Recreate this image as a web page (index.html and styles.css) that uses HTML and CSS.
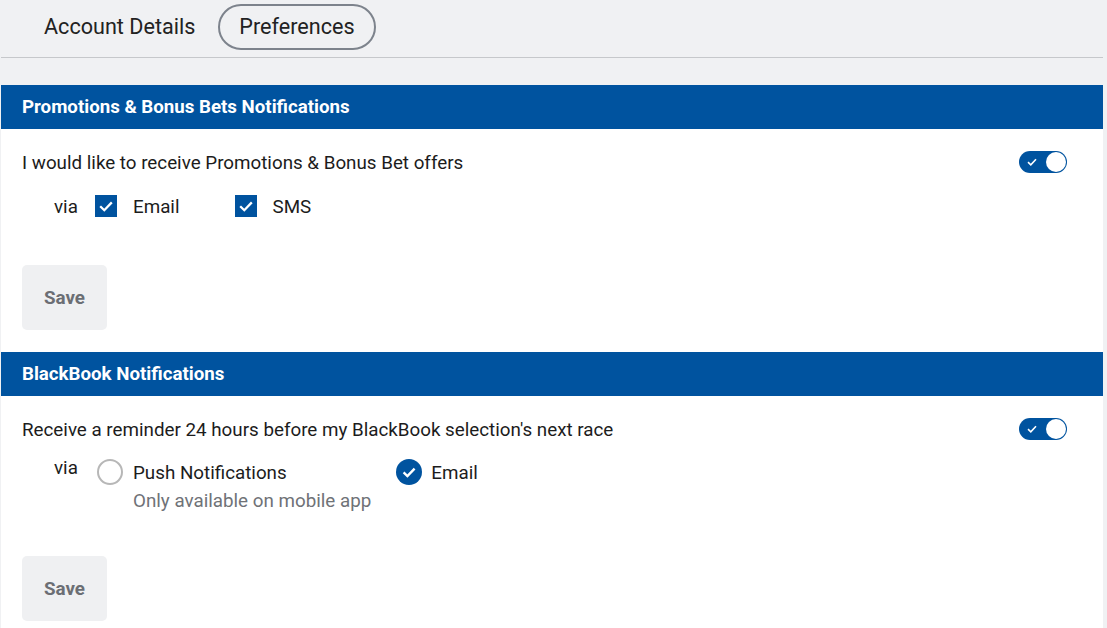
FILE: index.html
```html
<!DOCTYPE html>
<html>
<head>
<meta charset="utf-8">
<link rel="stylesheet" href="styles.css">
</head>
<body>
<div class="page">
  <nav class="tabs">
    <span class="tab">Account Details</span>
    <span class="tab active">Preferences</span>
  </nav>
  <div class="spacer"></div>

  <section class="card">
    <h2 class="card-head">Promotions &amp; Bonus Bets Notifications</h2>
    <div class="card-body">
      <div class="row">
        <span class="row-text">I would like to receive Promotions &amp; Bonus Bet offers</span>
        <span class="toggle"><svg class="toggle-check" viewBox="0 0 10 8" width="10" height="8"><path d="M1 4.2 L3.8 6.8 L9 1.2" fill="none" stroke="#fff" stroke-width="1.6"/></svg><span class="knob"></span></span>
      </div>
      <div class="options">
        <span class="via">via</span>
        <label class="opt"><span class="checkbox"><svg viewBox="0 0 22 22" width="22" height="22"><path d="M5.2 11.2 L9.3 15.2 L16.8 7.4" fill="none" stroke="#fff" stroke-width="2.3"/></svg></span><span class="opt-label">Email</span></label>
        <label class="opt opt-sms"><span class="checkbox"><svg viewBox="0 0 22 22" width="22" height="22"><path d="M5.2 11.2 L9.3 15.2 L16.8 7.4" fill="none" stroke="#fff" stroke-width="2.3"/></svg></span><span class="opt-label">SMS</span></label>
      </div>
      <button class="save">Save</button>
    </div>
  </section>

  <section class="card">
    <h2 class="card-head">BlackBook Notifications</h2>
    <div class="card-body">
      <div class="row">
        <span class="row-text">Receive a reminder 24 hours before my BlackBook selection's next race</span>
        <span class="toggle"><svg class="toggle-check" viewBox="0 0 10 8" width="10" height="8"><path d="M1 4.2 L3.8 6.8 L9 1.2" fill="none" stroke="#fff" stroke-width="1.6"/></svg><span class="knob"></span></span>
      </div>
      <div class="options options-radio">
        <span class="via via-top">via</span>
        <div class="radio-opt">
          <span class="radio"></span>
          <div class="radio-text">
            <span class="opt-label">Push Notifications</span>
            <span class="hint">Only available on mobile app</span>
          </div>
        </div>
        <div class="radio-opt radio-email">
          <span class="radio checked"><svg viewBox="0 0 26 26" width="26" height="26"><path d="M7.6 13.4 L11.4 17 L18.6 9.6" fill="none" stroke="#fff" stroke-width="2.4"/></svg></span>
          <div class="radio-text"><span class="opt-label">Email</span></div>
        </div>
      </div>
      <button class="save save-2">Save</button>
    </div>
  </section>
</div>
</body>
</html>
```

FILE: styles.css
```css
html, body {
  margin: 0;
  padding: 0;
  background: #f0f1f3;
  font-family: Roboto, "Liberation Sans", Arial, sans-serif;
  color: #1c1c1c;
}

.page {
  margin-left: 1px;
  width: 1102px;
}

.tabs {
  display: flex;
  align-items: center;
  gap: 2px;
  height: 57px;
  padding-left: 21px;
  border-bottom: 1px solid #c6c8cb;
  box-sizing: content-box;
}

.tab {
  font-size: 21.6px;
  color: #222;
  padding: 0 19px 0 20px;
  line-height: 42px;
  margin-top: -4px;
  border: 2px solid transparent;
  border-radius: 24px;
}

.tab.active {
  border-color: #7d838c;
  padding: 0 19px;
}

.spacer {
  height: 27px;
}

.card {
  background: #fff;
}

.card-head {
  margin: 0;
  height: 44px;
  line-height: 44px;
  background: #00539f;
  color: #fff;
  font-size: 18.7px;
  font-weight: 700;
  padding-left: 21px;
}

.card-body {
  padding: 22px 36px 22px 21px;
}

.row {
  display: flex;
  justify-content: space-between;
  align-items: center;
  height: 22px;
}

.row-text {
  font-size: 18.8px;
  line-height: 22px;
  padding-top: 2px;
}

.toggle {
  position: relative;
  display: flex;
  align-items: center;
  width: 48px;
  height: 22px;
  border-radius: 11px;
  background: #00539f;
  box-sizing: border-box;
}

.toggle-check {
  margin-left: 8px;
}

.knob {
  position: absolute;
  right: 1px;
  top: 1px;
  width: 20px;
  height: 20px;
  border-radius: 50%;
  background: #fff;
}

.options {
  display: flex;
  align-items: center;
  margin-top: 22px;
  padding-left: 32px;
  height: 22px;
}

.options > .via,
.options .opt-label {
  padding-top: 2px;
}

.via {
  font-size: 18.8px;
  width: 41px;
}

.opt {
  display: flex;
  align-items: center;
}

.opt-sms {
  margin-left: 55px;
}

.checkbox {
  width: 22px;
  height: 22px;
  background: #00539f;
  display: block;
}

.checkbox svg {
  display: block;
}

.opt-label {
  font-size: 18.8px;
  margin-left: 16px;
}

.save {
  display: block;
  margin-top: 48px;
  width: 85px;
  height: 65px;
  border: none;
  border-radius: 5px;
  background: #eff0f2;
  color: #6b6e74;
  font-family: Roboto, "Liberation Sans", Arial, sans-serif;
  font-weight: 700;
  font-size: 18.8px;
  padding: 0;
}

/* radio options */
.options-radio {
  align-items: flex-start;
  height: auto;
  margin-top: 19px;
}

.options-radio > .via,
.options-radio .opt-label {
  padding-top: 0;
}

.via-top {
  line-height: 18px;
  margin-top: 0;
  width: 43px;
}

.radio-opt {
  display: flex;
  align-items: flex-start;
}

.radio-email {
  margin-left: 25px;
}

.radio {
  width: 26px;
  height: 26px;
  border-radius: 50%;
  border: 2px solid #b7b7b7;
  box-sizing: border-box;
  flex: none;
}

.radio.checked {
  border: none;
  background: #00539f;
}

.radio.checked svg {
  display: block;
}

.radio-text {
  display: flex;
  flex-direction: column;
  margin-left: 10px;
}

.radio-text .opt-label {
  margin-left: 0;
  line-height: 28px;
}

.radio-email .radio-text {
  margin-left: 9px;
}

.hint {
  font-size: 18.8px;
  line-height: 28px;
  color: #6f7277;
}

.save-2 {
  margin-top: 41px;
}
```
